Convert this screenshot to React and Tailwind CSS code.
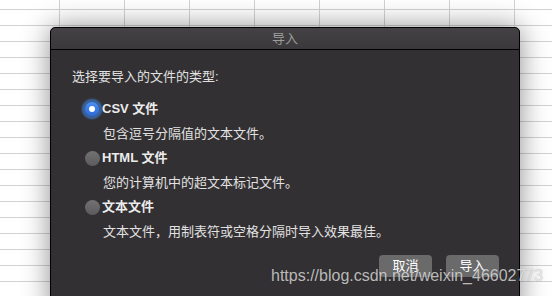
const FONT = { fontFamily: '"Liberation Sans", "Noto Sans CJK SC", sans-serif' };

function Radio({ checked }) {
  if (checked) {
    return (
      <span className="flex h-[20px] w-[20px] items-center justify-center rounded-full bg-[#3b6cb0]/80 shadow-[0_0_2px_rgba(70,130,220,0.8)]">
        <span className="flex h-[14px] w-[14px] items-center justify-center rounded-full bg-gradient-to-b from-[#4b8ef0] to-[#2d6ad8]">
          <span className="h-[6px] w-[6px] rounded-full bg-white" />
        </span>
      </span>
    );
  }
  return (
    <span className="flex h-[20px] w-[20px] items-center justify-center">
      <span className="h-[15px] w-[15px] rounded-full bg-gradient-to-b from-[#737273] to-[#5c5b5c]" />
    </span>
  );
}

const options = [
  { label: "CSV 文件", desc: "包含逗号分隔值的文本文件。", checked: true },
  { label: "HTML 文件", desc: "您的计算机中的超文本标记文件。" },
  { label: "文本文件", desc: "文本文件，用制表符或空格分隔时导入效果最佳。" },
];

export default function App() {
  const rows = Array.from({ length: 20 });
  const cols = Array.from({ length: 9 });

  return (
    <div className="relative h-[296px] w-[552px] overflow-hidden bg-white" style={FONT}>
      {/* spreadsheet behind */}
      <div className="grid grid-cols-[60px_repeat(8,65px)]">
        {rows.map((_, r) =>
          cols.map((_, c) => (
            <div
              key={r + "-" + c}
              className={
                "border-b border-r border-[#d2d2d2] " + (r === 0 ? "h-[10px]" : "h-[16px]")
              }
            />
          ))
        )}
      </div>

      {/* dialog */}
      <div className="absolute left-[50px] top-[27px] flex h-[290px] w-[470px] flex-col rounded-t-[5px] border border-black bg-[#323032] shadow-[0_0_28px_rgba(0,0,0,0.45)]">
        <div className="flex h-[22px] items-center justify-center rounded-t-[5px] border-b border-black bg-gradient-to-b from-[#444244] to-[#3a383a] text-[13px] text-[#9c9c9c]">
          导入
        </div>

        <div className="flex flex-1 flex-col pl-[21px] pr-[20px] pt-[18px] text-[13px] text-[#e2e2e2]">
          <div className="flex h-[18px] items-center">选择要导入的文件的类型:</div>

          <div className="mt-[11px] flex flex-col">
            {options.map((o) => (
              <div key={o.label} className="flex flex-col">
                <div className="flex h-[24px] items-center pl-[10px]">
                  <Radio checked={o.checked} />
                  <span className="font-bold text-[#ececec]">{o.label}</span>
                </div>
                <div className="flex h-[25px] items-center pl-[31px]">{o.desc}</div>
              </div>
            ))}
          </div>

          <div className="mt-[11px] flex justify-end gap-[14px]">
            <button className="h-[22px] w-[53px] rounded-[4px] bg-[#6b6a6b] text-[13px] text-white">取消</button>
            <button className="h-[22px] w-[53px] rounded-[4px] bg-[#6b6a6b] text-[13px] text-white">导入</button>
          </div>
        </div>
      </div>

      {/* watermark */}
      <div className="absolute left-[271px] top-[266px] text-[16px] leading-[20px] text-white/70 [text-shadow:0_0_1px_rgba(0,0,0,0.35)]">
        https://blog.csdn.net/weixin_46602773
      </div>
    </div>
  );
}
